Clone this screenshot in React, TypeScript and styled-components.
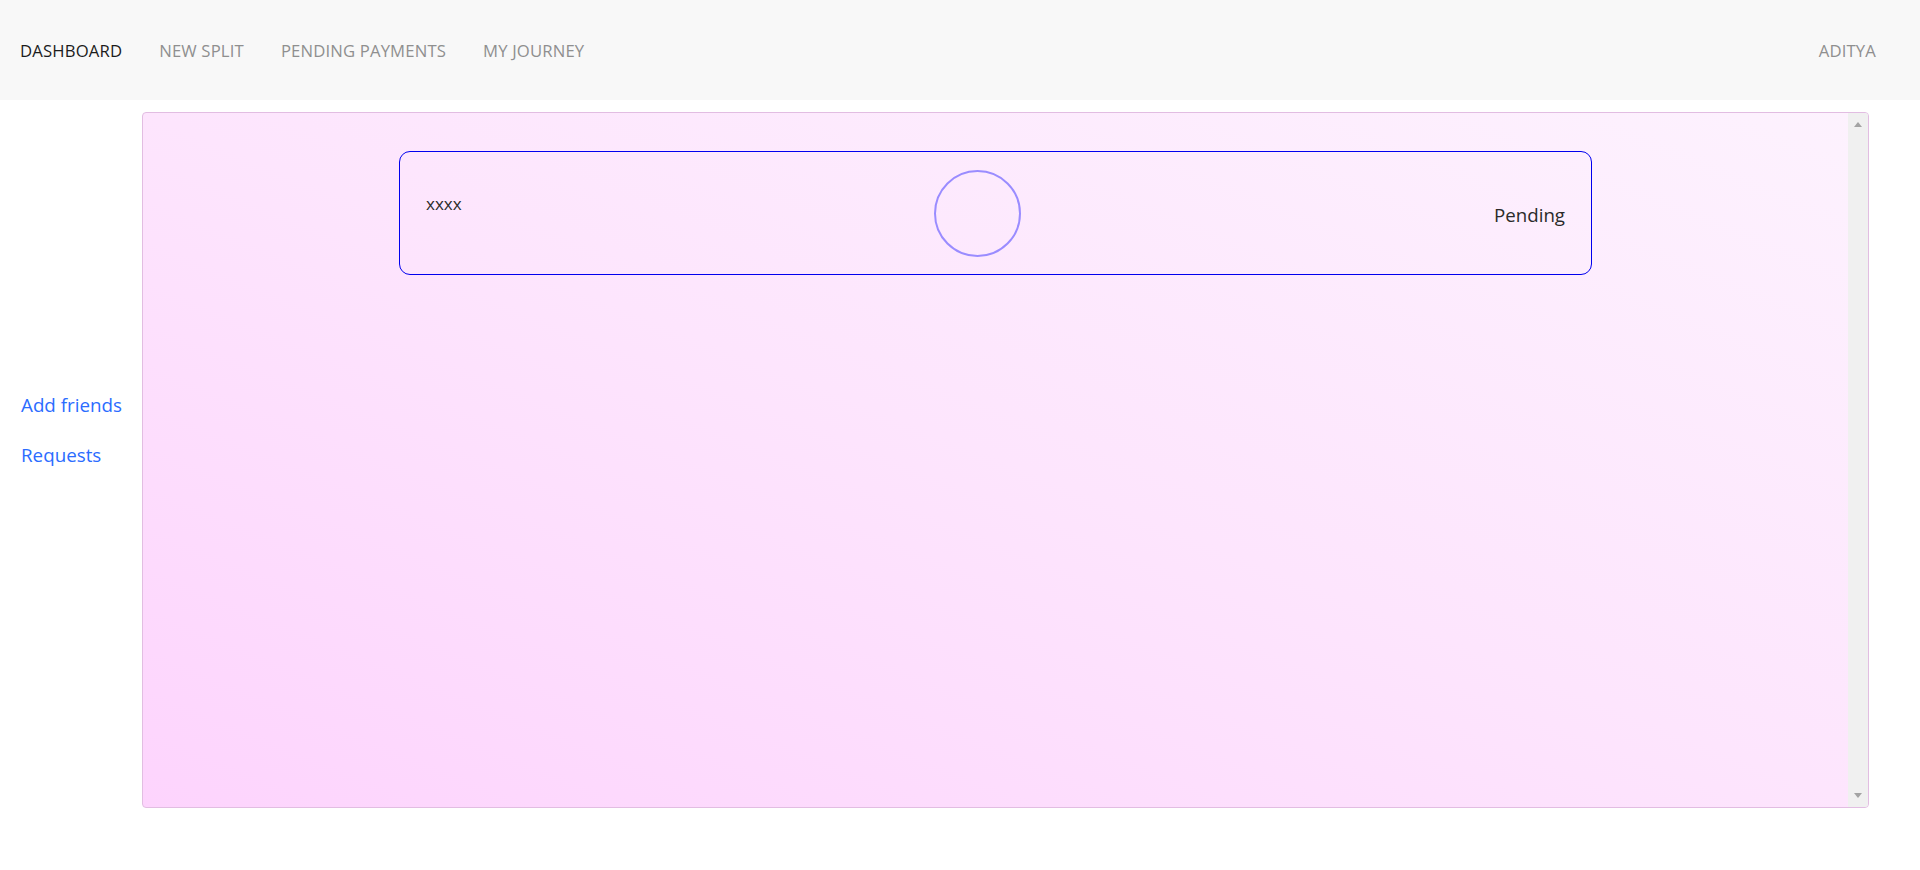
import React from "react";
import styled, { createGlobalStyle } from "styled-components";

const GlobalStyle = createGlobalStyle`
  html, body {
    margin: 0;
    padding: 0;
    background: #ffffff;
    font-family: "Open Sans", "Noto Sans", "Liberation Sans", sans-serif;
    color: #212529;
  }
  * { box-sizing: border-box; }
`;

const Page = styled.div`
  width: 1920px;
  height: 870px;
  display: flex;
  flex-direction: column;
`;

const NavBar = styled.nav`
  height: 100px;
  background: #f8f8f8;
  display: flex;
  align-items: center;
  justify-content: space-between;
  padding: 0 44px 0 20px;
`;

const NavList = styled.div`
  display: flex;
  align-items: center;
  gap: 37px;
`;

const NavLink = styled.a<{ $active?: boolean }>`
  font-size: 16.7px;
  font-weight: 400;
  letter-spacing: 0.15px;
  text-transform: uppercase;
  color: ${(p) => (p.$active ? "#1c1c1c" : "#8f8f8f")};
  text-decoration: none;
  cursor: pointer;
`;

const Body = styled.div`
  display: flex;
  padding-top: 12px;
`;

const Sidebar = styled.aside`
  width: 142px;
  flex-shrink: 0;
  display: flex;
  flex-direction: column;
  gap: 20px;
  padding: 278px 0 0 21px;
`;

const SideLink = styled.a`
  font-size: 18.8px;
  line-height: 30px;
  color: #2b6cff;
  text-decoration: none;
  cursor: pointer;
`;

const Panel = styled.section`
  width: 1727px;
  height: 696px;
  border: 1px solid #e2bde2;
  border-radius: 4px;
  overflow: hidden;
  display: flex;
  background: linear-gradient(to top right, #fdd4fd 0%, #fde5fd 50%, #fdf2fe 100%);
`;

const ScrollArea = styled.div`
  flex: 1;
  display: flex;
  flex-direction: column;
  align-items: center;
  padding-top: 38px;
`;

const ScrollTrack = styled.div`
  width: 20px;
  background: #f0f0f0;
  display: flex;
  flex-direction: column;
  justify-content: space-between;
  align-items: center;
  padding: 9px 0 9px;
`;

const Arrow = styled.span<{ $down?: boolean }>`
  width: 0;
  height: 0;
  border-left: 4.5px solid transparent;
  border-right: 4.5px solid transparent;
  ${(p) =>
    p.$down
      ? "border-top: 5px solid #a3a3a3;"
      : "border-bottom: 5px solid #a3a3a3;"}
`;

const Card = styled.div`
  width: 1193px;
  height: 124px;
  border: 1px solid #0000ee;
  border-radius: 11px;
  display: flex;
  align-items: center;
  justify-content: space-between;
  padding: 0 26px;
`;

const Name = styled.span`
  font-size: 17px;
  line-height: 24px;
  color: #2a2a2a;
  margin-bottom: 18px;
`;

const Avatar = styled.div`
  width: 87px;
  height: 87px;
  border-radius: 50%;
  border: 2px solid #9a8cff;
`;

const Status = styled.span`
  font-size: 18.7px;
  line-height: 28px;
  color: #2a2a2a;
  margin-top: 4px;
`;

export default function App() {
  return (
    <>
      <GlobalStyle />
      <Page>
        <NavBar>
          <NavList>
            <NavLink $active>Dashboard</NavLink>
            <NavLink>New Split</NavLink>
            <NavLink>Pending Payments</NavLink>
            <NavLink>My Journey</NavLink>
          </NavList>
          <NavLink>Aditya</NavLink>
        </NavBar>
        <Body>
          <Sidebar>
            <SideLink>Add friends</SideLink>
            <SideLink>Requests</SideLink>
          </Sidebar>
          <Panel>
            <ScrollArea>
              <Card>
                <Name>xxxx</Name>
                <Avatar />
                <Status>Pending</Status>
              </Card>
            </ScrollArea>
            <ScrollTrack>
              <Arrow />
              <Arrow $down />
            </ScrollTrack>
          </Panel>
        </Body>
      </Page>
    </>
  );
}
